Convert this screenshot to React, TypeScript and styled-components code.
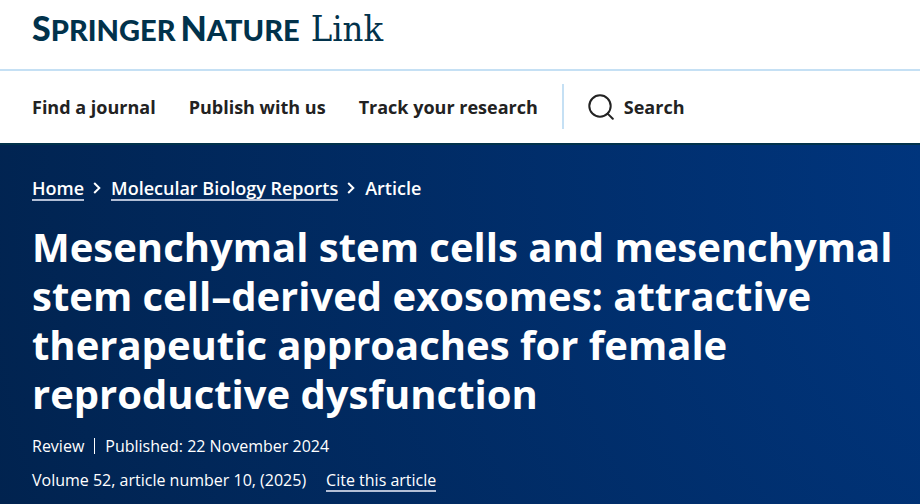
import React from "react";
import styled, { createGlobalStyle } from "styled-components";

const sans = `"Open Sans", "Noto Sans", sans-serif`;

const Global = createGlobalStyle`
  *, *::before, *::after { box-sizing: border-box; }
  html, body, #root { height: 100%; }
  body { margin: 0; background: #fff; color: #222; font-family: ${sans}; }
`;
const Page = styled.div`
  min-height: 100%;
  display: flex;
  flex-direction: column;
`;
const Masthead = styled.header`
  display: flex;
  padding: 13px 32px 24px;
  border-bottom: 2px solid #c5e0f4;
`;
const Logo = styled.a`
  display: inline-flex;
  align-items: baseline;
  gap: 5px;
  color: #01324b;
  text-decoration: none;
`;
const Brand = styled.span`
  display: inline-block;
  font: 900 29px/30px Lato, sans-serif;
  text-transform: uppercase;
  &::first-letter { font-size: 34px; }
`;
const Product = styled.span`
  margin-left: 6px;
  font: 400 36px/30px "DejaVu Serif Condensed", "DejaVu Serif", serif;
`;
const Nav = styled.nav`
  display: flex;
  align-items: center;
  padding: 13px 32px 14px;
  border-bottom: 2px solid #01324b;
`;
const NavList = styled.ul`
  display: flex;
  gap: 33px;
  margin: 0 24px 0 0;
  padding: 0;
  list-style: none;
`;
const NavLink = styled.a`
  font: 700 18px/24px ${sans};
  text-decoration: none;
  color: #222;
  white-space: nowrap;
`;
const Search = styled(NavLink)`
  display: flex;
  align-items: center;
  gap: 10px;
  padding: 10px 0 9px 24px;
  border-left: 2px solid #c5e0f4;
`;
const Hero = styled.main`
  flex: 1;
  padding: 32px 24px 12px 32px;
  color: #fff;
  background: radial-gradient(circle at 130% 0, #003a8a, #01234f);
`;
const Crumbs = styled.ol`
  display: flex;
  align-items: center;
  gap: 10px;
  margin: 0;
  padding: 0;
  list-style: none;
  font: 600 18px/22px ${sans};
`;
const Crumb = styled.li`
  display: flex;
  align-items: center;
  gap: 9px;
`;
const Underlined = styled.a`
  display: inline-block;
  margin-bottom: -2px;
  color: inherit;
  text-decoration: none;
  border-bottom: 2px solid #b3bfd6;
`;
const Title = styled.h1`
  margin: 23px 0 16px;
  font: 700 40px/49px ${sans};
`;
const Meta = styled.ul`
  display: flex;
  align-items: center;
  flex-wrap: wrap;
  gap: 0 20px;
  margin: 0 0 10px;
  padding: 0;
  list-style: none;
  font: 400 16px/24px ${sans};
`;
const Divided = styled.li`
  display: flex;
  align-items: center;
  gap: 10px;
  &::after {
    content: "";
    height: 16px;
    border-left: 1px solid #fff;
  }
  & + li { margin-left: -10px; }
`;
const CiteLink = styled(Underlined)`
  line-height: 20px;
`;

const Chevron = () => (
  <svg width="8" height="12" viewBox="0 0 8 12" fill="none" stroke="#fff" strokeWidth="2" aria-hidden="true">
    <path d="M1.2 1 6.3 6 1.2 11" />
  </svg>
);
const SearchIcon = () => (
  <svg width="26" height="26" viewBox="0 0 26 26" fill="none" stroke="#222" strokeWidth="2" strokeLinecap="round" aria-hidden="true">
    <circle cx="12" cy="12" r="10.7" />
    <path d="M19.6 19.6 24.8 24.8" />
  </svg>
);

export default function App() {
  return (
    <Page>
      <Global />
      <Masthead>
        <Logo href="#">
          <Brand>Springer</Brand>
          <Brand>Nature</Brand>
          <Product>Link</Product>
        </Logo>
      </Masthead>
      <Nav aria-label="Main">
        <NavList>
          <li><NavLink href="#">Find a journal</NavLink></li>
          <li><NavLink href="#">Publish with us</NavLink></li>
          <li><NavLink href="#">Track your research</NavLink></li>
        </NavList>
        <Search href="#"><SearchIcon />Search</Search>
      </Nav>
      <Hero>
        <nav aria-label="Breadcrumbs">
          <Crumbs>
            <Crumb><Underlined href="#">Home</Underlined><Chevron /></Crumb>
            <Crumb><Underlined href="#">Molecular Biology Reports</Underlined><Chevron /></Crumb>
            <Crumb>Article</Crumb>
          </Crumbs>
        </nav>
        <Title>
          Mesenchymal stem cells and mesenchymal stem cell–derived exosomes: attractive
          therapeutic approaches for female reproductive dysfunction
        </Title>
        <Meta>
          <Divided>Review</Divided>
          <li>Published: 22 November 2024</li>
        </Meta>
        <Meta>
          <li>Volume 52, article number 10, (2025)</li>
          <li><CiteLink href="#">Cite this article</CiteLink></li>
        </Meta>
      </Hero>
    </Page>
  );
}
